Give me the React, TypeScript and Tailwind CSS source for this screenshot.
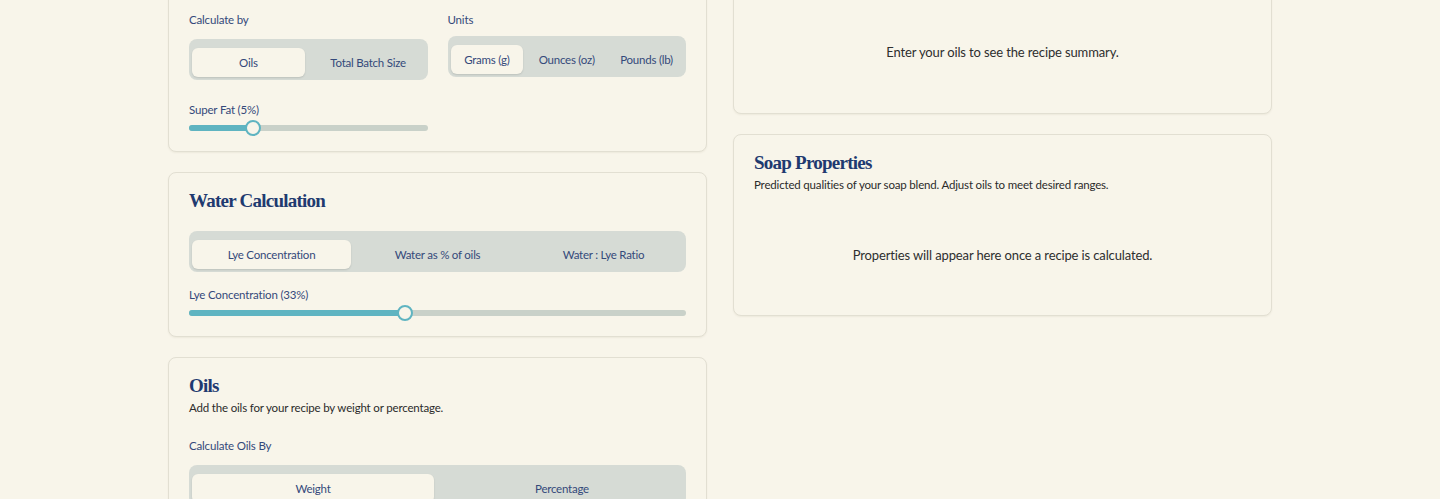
import React from 'react'

// Soap calculator — settings column + summary column

const labelCls = "text-[11.5px] leading-5 tracking-[-0.015em] text-[#34497a]"
const headingCls = "font-['Liberation_Serif',serif] text-[19px] leading-4 font-bold tracking-[-0.04em] text-[#1f3a70]"
const descCls = "text-[11.5px] leading-5 tracking-[-0.015em] text-[#2b2b2b]"
const bodyCls = "text-[13px] leading-5 tracking-[-0.01em] text-[#2e2e2e]"

function Card({ children, className = "" }: { children: React.ReactNode; className?: string }) {
    return (
        <div className={"rounded-lg border border-[#e2dfd2] bg-[#f8f5ea] shadow-[0_1px_2px_rgba(60,50,20,0.06)] " + className}>
            {children}
        </div>
    )
}

function Segmented({ options, active, cols }: { options: string[]; active: number; cols: string }) {
    return (
        <div className={"grid gap-[7px] rounded-lg bg-[#d6dbd5] px-[3px] pt-[9px] pb-[3px] " + cols}>
            {options.map((o, i) => (
                <button
                    key={o}
                    className={
                        "h-[29px] rounded-md text-[11.5px] tracking-[-0.02em] text-[#34497a] " +
                        (i === active ? "bg-[#f8f5ea] shadow-[0_1px_2px_rgba(0,0,0,0.12)]" : "")
                    }
                >
                    {o}
                </button>
            ))}
        </div>
    )
}

function Slider({ percent }: { percent: number }) {
    return (
        <div className="relative h-1.5 rounded-full bg-[#c9d1c9]">
            <div
                className="absolute left-0 top-0 h-full rounded-full bg-[#5fb4c1]"
                style={{ width: `calc(${percent} * (100% - 16px) / 100 + 8px)` }}
            />
            <div
                className="absolute top-1/2 size-4 -translate-y-1/2 rounded-full border-2 border-[#5fb4c1] bg-[#f8f5ea]"
                style={{ left: `calc(${percent} * (100% - 16px) / 100)` }}
            />
        </div>
    )
}

export default function App() {
    return (
        <div className="min-h-screen overflow-hidden bg-[#f8f5ea] font-['Lato',sans-serif]">
            <div className="mx-auto -mt-[11px] grid w-[1104px] grid-cols-2 items-start gap-[26px]">
                {/* left column */}
                <div className="space-y-5">
                    <Card className="p-5">
                        <div className="grid grid-cols-2 gap-5">
                            <div>
                                <div className={labelCls}>Calculate by</div>
                                <div className="mt-[9px]">
                                    <Segmented options={["Oils", "Total Batch Size"]} active={0} cols="grid-cols-2" />
                                </div>
                            </div>
                            <div>
                                <div className={labelCls}>Units</div>
                                <div className="mt-[6px]">
                                    <Segmented options={["Grams (g)", "Ounces (oz)", "Pounds (lb)"]} active={0} cols="grid-cols-3" />
                                </div>
                            </div>
                        </div>
                        <div className="mt-5 grid grid-cols-2 gap-5">
                            <div>
                                <div className={labelCls}>Super Fat (5%)</div>
                                <div className="mt-[5px]">
                                    <Slider percent={25} />
                                </div>
                            </div>
                        </div>
                    </Card>

                    <Card className="p-5">
                        <h2 className={headingCls}>Water Calculation</h2>
                        <div className="mt-[22px]">
                            <Segmented options={["Lye Concentration", "Water as % of oils", "Water : Lye Ratio"]} active={0} cols="grid-cols-3" />
                        </div>
                        <div className={"mt-[13px] " + labelCls}>Lye Concentration (33%)</div>
                        <div className="mt-[5px]">
                            <Slider percent={43.2} />
                        </div>
                    </Card>

                    <Card className="p-5">
                        <h2 className={headingCls}>Oils</h2>
                        <p className={"mt-1 " + descCls}>Add the oils for your recipe by weight or percentage.</p>
                        <div className={"mt-[18px] " + labelCls}>Calculate Oils By</div>
                        <div className="mt-[9px]">
                            <Segmented options={["Weight", "Percentage"]} active={0} cols="grid-cols-2" />
                        </div>
                        <div className="h-40" />
                    </Card>
                </div>

                {/* right column */}
                <div className="space-y-5">
                    <Card className="flex h-[125px] items-center justify-center">
                        <p className={bodyCls}>Enter your oils to see the recipe summary.</p>
                    </Card>

                    <Card className="p-5">
                        <h2 className={headingCls}>Soap Properties</h2>
                        <p className={"mt-1 " + descCls}>
                            Predicted qualities of your soap blend. Adjust oils to meet desired ranges.
                        </p>
                        <p className={"pt-[50px] pb-[30px] text-center " + bodyCls}>
                            Properties will appear here once a recipe is calculated.
                        </p>
                    </Card>
                </div>
            </div>
        </div>
    )
}
